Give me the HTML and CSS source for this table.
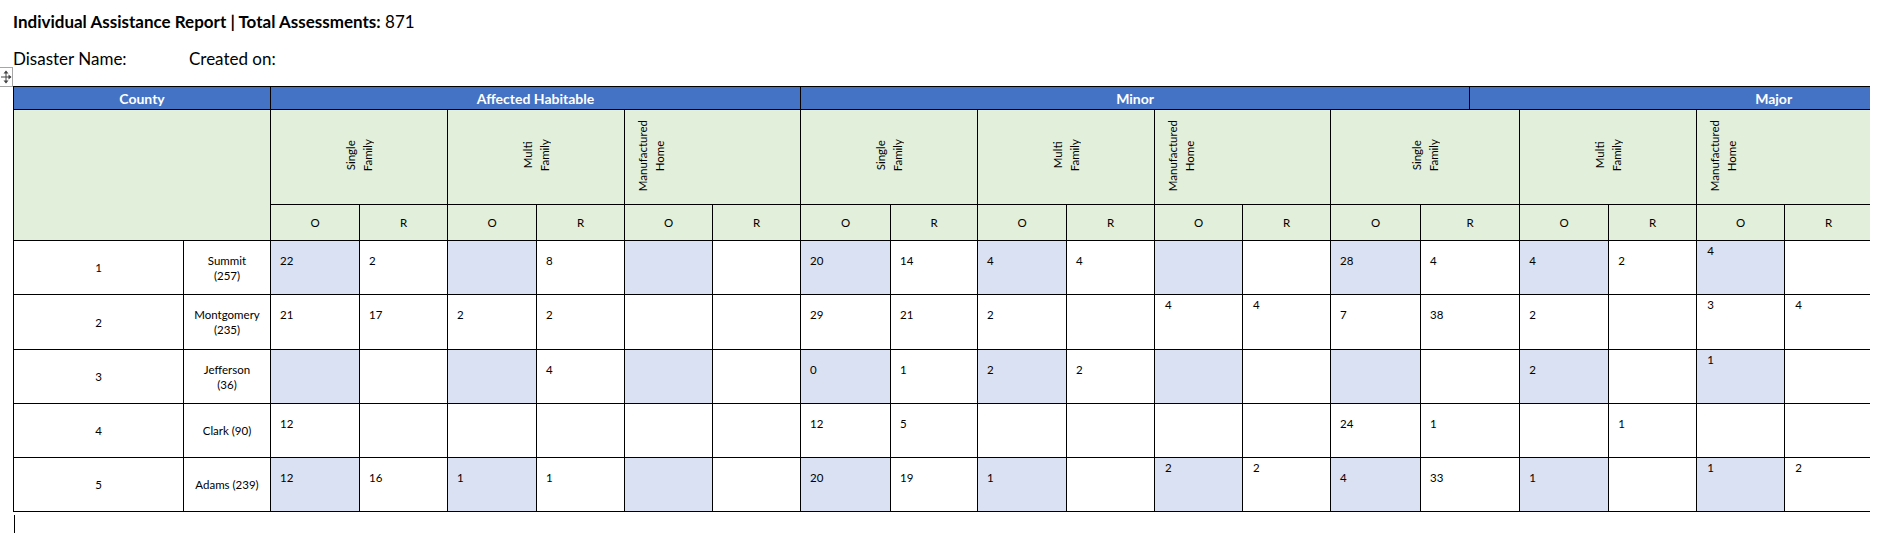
FILE: index.html
```html
<!DOCTYPE html>
<html>
<head>
<meta charset="utf-8">
<link rel="stylesheet" href="styles.css">
</head>
<body>
<div class="doc">
  <p class="title"><b>Individual Assistance Report | Total Assessments:</b> 871</p>
  <p class="meta"><span class="dn">Disaster Name:</span><span>Created on:</span></p>
  <div class="handle"><svg width="12" height="14" viewBox="0 0 12 14"><g fill="none" stroke="#444" stroke-width="1"><path d="M6 1.5v11M1 7h10"/></g><g fill="#444"><path d="M6 0.5l-2.5 3h5z"/><path d="M6 13.5l-2.5-3h5z"/><path d="M11.5 7l-3-2.5v5z"/></g></svg></div>
  <div class="clip">
    <table>
      <colgroup>
        <col style="width:170px"><col style="width:87px">
        <col style="width:89px"><col style="width:88px"><col style="width:89px"><col style="width:88px"><col style="width:88px"><col style="width:88px">
        <col style="width:90px"><col style="width:87px"><col style="width:89px"><col style="width:88px"><col style="width:88px"><col style="width:88px">
        <col style="width:90px"><col style="width:49px"><col style="width:50px"><col style="width:89px"><col style="width:88px"><col style="width:88px"><col style="width:88px"><col style="width:205px">
      </colgroup>
      <tr class="ra">
        <td colspan="2" class="hd">County</td>
        <td colspan="6" class="hd">Affected Habitable</td>
        <td colspan="8" class="hd">Minor</td>
        <td colspan="6" class="hd">Major</td>
      </tr>
      <tr class="rb">
        <td colspan="2" rowspan="2" class="g"></td>
        <td colspan="2" class="g rot"><div class="v">Single<br>Family</div></td>
        <td colspan="2" class="g rot"><div class="v">Multi<br>Family</div></td>
        <td colspan="2" class="g rot mh"><div class="v">Manufactured<br>Home</div></td>
        <td colspan="2" class="g rot"><div class="v">Single<br>Family</div></td>
        <td colspan="2" class="g rot"><div class="v">Multi<br>Family</div></td>
        <td colspan="2" class="g rot mh"><div class="v">Manufactured<br>Home</div></td>
        <td colspan="3" class="g rot"><div class="v">Single<br>Family</div></td>
        <td colspan="2" class="g rot"><div class="v">Multi<br>Family</div></td>
        <td colspan="2" class="g rot mh"><div class="v">Manufactured<br>Home</div></td>
        <td class="g"></td>
      </tr>
      <tr class="rc">
        <td class="g or">O</td><td class="g or">R</td><td class="g or">O</td><td class="g or">R</td><td class="g or">O</td><td class="g or">R</td>
        <td class="g or">O</td><td class="g or">R</td><td class="g or">O</td><td class="g or">R</td><td class="g or">O</td><td class="g or">R</td>
        <td class="g or">O</td><td colspan="2" class="g or">R</td><td class="g or">O</td><td class="g or">R</td><td class="g or">O</td><td class="g or">R</td>
        <td class="g"></td>
      </tr>
      <tr class="rd">
        <td class="c">1</td><td class="c">Summit<br>(257)</td>
        <td class="n s">22</td><td class="n">2</td><td class="n s"></td><td class="n">8</td><td class="n s"></td><td class="n"></td>
        <td class="n s">20</td><td class="n">14</td><td class="n s">4</td><td class="n">4</td><td class="h s"></td><td class="h"></td>
        <td class="n s">28</td><td class="n" colspan="2">4</td><td class="n s">4</td><td class="n">2</td><td class="h s">4</td><td class="h"></td><td class="n"></td>
      </tr>
      <tr class="re">
        <td class="c">2</td><td class="c">Montgomery<br>(235)</td>
        <td class="n">21</td><td class="n">17</td><td class="n">2</td><td class="n">2</td><td class="n"></td><td class="n"></td>
        <td class="n">29</td><td class="n">21</td><td class="n">2</td><td class="n"></td><td class="h">4</td><td class="h">4</td>
        <td class="n">7</td><td class="n" colspan="2">38</td><td class="n">2</td><td class="n"></td><td class="h">3</td><td class="h">4</td><td class="n"></td>
      </tr>
      <tr class="rd">
        <td class="c">3</td><td class="c">Jefferson<br>(36)</td>
        <td class="n s"></td><td class="n"></td><td class="n s"></td><td class="n">4</td><td class="n s"></td><td class="n"></td>
        <td class="n s">0</td><td class="n">1</td><td class="n s">2</td><td class="n">2</td><td class="h s"></td><td class="h"></td>
        <td class="n s"></td><td class="n" colspan="2"></td><td class="n s">2</td><td class="n"></td><td class="h s">1</td><td class="h"></td><td class="n"></td>
      </tr>
      <tr class="rd">
        <td class="c">4</td><td class="c">Clark (90)</td>
        <td class="n">12</td><td class="n"></td><td class="n"></td><td class="n"></td><td class="n"></td><td class="n"></td>
        <td class="n">12</td><td class="n">5</td><td class="n"></td><td class="n"></td><td class="h"></td><td class="h"></td>
        <td class="n">24</td><td class="n" colspan="2">1</td><td class="n"></td><td class="n">1</td><td class="h"></td><td class="h"></td><td class="n"></td>
      </tr>
      <tr class="rd">
        <td class="c">5</td><td class="c">Adams (239)</td>
        <td class="n s">12</td><td class="n">16</td><td class="n s">1</td><td class="n">1</td><td class="n s"></td><td class="n"></td>
        <td class="n s">20</td><td class="n">19</td><td class="n s">1</td><td class="n"></td><td class="h s">2</td><td class="h">2</td>
        <td class="n s">4</td><td class="n" colspan="2">33</td><td class="n s">1</td><td class="n"></td><td class="h s">1</td><td class="h">2</td><td class="n"></td>
      </tr>
    </table>
  </div>
  <div class="caret"></div>
</div>
</body>
</html>
```

FILE: styles.css
```css
* { box-sizing: border-box; }
html, body { margin: 0; padding: 0; background: #fff; }
body { font-family: Lato, "Noto Sans", sans-serif; color: #000; }

.doc { position: relative; padding: 12px 0 0 13px; }

.title { margin: 0; font-size: 17px; line-height: 20px; font-weight: 400; }
.title b { font-weight: 700; }

.meta { margin: 17px 0 0; font-size: 17px; line-height: 20px; display: flex; }
.meta .dn { width: 176px; }

.handle {
  position: absolute; left: -1px; top: 67px; width: 14px; height: 20px;
  border: 1px solid #a6a6a6; background: #fff;
  display: flex; align-items: center; justify-content: center;
}
.handle svg { display: block; }

.clip { width: 1857px; overflow: hidden; margin-top: 17px; }

table { border-collapse: collapse; table-layout: fixed; width: 2064px; }
td { border: 1px solid #000; padding: 0; font-size: 11.5px; line-height: 15px; }

tr.ra { height: 23px; }
tr.rb { height: 95px; }
tr.rc { height: 36px; }
tr.rd { height: 54px; }
tr.re { height: 55px; }

.hd { background: #4472C4; color: #fff; font-weight: 700; font-size: 14px; text-align: center; vertical-align: middle; }
.g { background: #E2EFDA; }
.rot { text-align: center; vertical-align: middle; }
.rot.mh { text-align: left; padding-left: 9px; }
.v { display: inline-block; writing-mode: vertical-rl; transform: rotate(180deg); text-align: center; line-height: 17px; }
.or { text-align: center; vertical-align: middle; }

.c { text-align: center; vertical-align: middle; }
.n { vertical-align: top; padding: 12px 0 0 9px; }
.h { vertical-align: top; padding: 2px 0 0 10px; }
.s { background: #D9E1F2; }

.caret { width: 1px; height: 18px; background: #000; margin: 3px 0 0 1px; }
```
